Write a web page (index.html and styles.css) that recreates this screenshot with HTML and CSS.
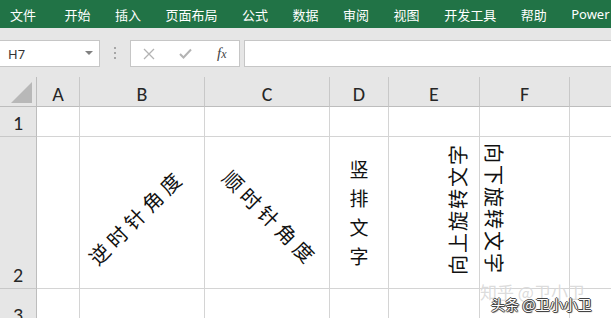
FILE: index.html
```html
<!DOCTYPE html>
<html lang="zh-CN">
<head>
  <meta charset="UTF-8" />
  <title>Excel - 文字方向</title>
  <link rel="stylesheet" href="styles.css">
</head>
<body>

  <div class="ribbon">
    <span class="tab tab-file">文件</span>
    <span class="tab">开始</span>
    <span class="tab">插入</span>
    <span class="tab">页面布局</span>
    <span class="tab">公式</span>
    <span class="tab">数据</span>
    <span class="tab">审阅</span>
    <span class="tab">视图</span>
    <span class="tab">开发工具</span>
    <span class="tab">帮助</span>
    <span class="tab tab-latin">Power</span>
  </div>

  <div class="formula-row">
    <div class="name-box">
      <span>H7</span>
      <svg width="8" height="5" viewBox="0 0 8 5"><path d="M0 0 L8 0 L4 4 Z" fill="#808080"/></svg>
    </div>
    <div class="grip">
      <svg width="3" height="13" viewBox="0 0 3 13">
        <rect x="0" y="0" width="2" height="2" fill="#a6a6a6"/>
        <rect x="0" y="5" width="2" height="2" fill="#a6a6a6"/>
        <rect x="0" y="10" width="2" height="2" fill="#a6a6a6"/>
      </svg>
    </div>
    <div class="fx-buttons">
      <svg class="btn" width="12" height="12" viewBox="0 0 12 12"><path d="M1 1 L11 11 M11 1 L1 11" stroke="#b3b3b3" stroke-width="1.3" fill="none"/></svg>
      <svg class="btn" width="13" height="11" viewBox="0 0 13 11"><path d="M1 6 L4.5 9.5 L12 1.5" stroke="#b3b3b3" stroke-width="2" fill="none"/></svg>
      <span class="fx">f<span class="fx-x">x</span></span>
    </div>
    <div class="formula-input"></div>
  </div>

  <div class="sheet">
    <div class="corner">
      <svg width="22" height="21" viewBox="0 0 22 21"><path d="M21 0 L21 21 L0 21 Z" fill="#b8b8b8"/></svg>
    </div>
    <div class="col-head">A</div>
    <div class="col-head">B</div>
    <div class="col-head">C</div>
    <div class="col-head">D</div>
    <div class="col-head">E</div>
    <div class="col-head">F</div>
    <div class="col-head col-rest"></div>

    <div class="row-head">1</div>
    <div class="cell"></div><div class="cell"></div><div class="cell"></div><div class="cell"></div>
    <div class="cell"></div><div class="cell"></div><div class="cell cell-rest"></div>

    <div class="row-head">2</div>
    <div class="cell"></div>
    <div class="cell cell-text"><span class="rot rot-ccw">逆时针角度</span></div>
    <div class="cell cell-text"><span class="rot rot-cw">顺时针角度</span></div>
    <div class="cell cell-text"><span class="stacked">竖排文字</span></div>
    <div class="cell cell-text"><span class="rot rot-up">向上旋转文字</span></div>
    <div class="cell cell-text"><span class="rot rot-down">向下旋转文字</span></div>
    <div class="cell cell-rest"></div>

    <div class="row-head">3</div>
    <div class="cell"></div><div class="cell"></div><div class="cell"></div><div class="cell"></div>
    <div class="cell"></div><div class="cell"></div><div class="cell cell-rest"></div>
  </div>

  <div class="watermark">
    <span class="wm-back">知乎 @卫小卫</span>
    <span class="wm-front">头条 @卫小小卫</span>
  </div>

</body>
</html>
```

FILE: styles.css
```css
* {
  box-sizing: border-box;
}
body {
  margin: 0;
  width: 611px;
  height: 318px;
  overflow: hidden;
  background-color: #e6e6e6;
  font-family: "Noto Sans CJK SC", sans-serif;
  position: relative;
}
.ribbon {
  height: 28px;
  background-color: #217346;
  color: white;
  display: flex;
  align-items: center;
  gap: 24.5px;
  padding-left: 10px;
  font-size: 13px;
  white-space: nowrap;
}
.tab-file {
  margin-right: 4px;
}
.tab-latin {
  font-family: "Noto Sans", sans-serif;
}
.formula-row {
  height: 49px;
  display: flex;
  align-items: flex-start;
  padding-top: 12px;
}
.name-box {
  width: 101px;
  height: 27px;
  margin-left: -1px;
  background: white;
  border: 1px solid #c6c6c6;
  display: flex;
  align-items: center;
  justify-content: space-between;
  padding: 0 6px 0 8px;
  font-family: "Noto Sans", sans-serif;
  font-size: 13px;
  color: #333;
}
.grip {
  width: 30px;
  height: 27px;
  display: flex;
  align-items: center;
  justify-content: center;
}
.fx-buttons {
  width: 110px;
  height: 27px;
  background: white;
  border: 1px solid #c6c6c6;
  display: flex;
  align-items: center;
  padding-left: 12px;
  gap: 24px;
}
.fx {
  font-family: "Liberation Serif", serif;
  font-style: italic;
  font-size: 15px;
  color: #444;
  margin-left: 1px;
}
.fx-x {
  font-size: 12px;
}
.formula-input {
  flex: 1;
  height: 27px;
  margin-left: 4px;
  margin-right: -2px;
  background: white;
  border: 1px solid #c6c6c6;
}
.sheet {
  display: grid;
  grid-template-columns: 37px 43px 125px 125px 59px 91px 90px 1fr;
  grid-template-rows: 30px 30px 152px 40px;
  background: white;
}
.corner {
  background: #e6e6e6;
  border-right: 1px solid #bdbdbd;
  border-bottom: 1px solid #bdbdbd;
  display: flex;
  align-items: flex-end;
  justify-content: flex-end;
  padding: 0 3px 3px 0;
}
.col-head {
  background: #e6e6e6;
  border-right: 1px solid #c8c8c8;
  border-bottom: 1px solid #bdbdbd;
  display: flex;
  align-items: center;
  justify-content: center;
  padding-top: 4px;
  font-family: Carlito, Lato, sans-serif;
  font-size: 20px;
  color: #262626;
}
.col-rest {
  border-right: none;
}
.row-head {
  background: #e6e6e6;
  border-right: 1px solid #bdbdbd;
  border-bottom: 1px solid #c8c8c8;
  display: flex;
  align-items: flex-end;
  justify-content: center;
  padding-bottom: 1px;
  font-family: Carlito, Lato, sans-serif;
  font-size: 20px;
  color: #262626;
}
.cell {
  border-right: 1px solid #d4d4d4;
  border-bottom: 1px solid #d4d4d4;
}
.cell-rest {
  border-right: none;
}
.cell-text {
  display: flex;
  align-items: center;
  justify-content: center;
  font-size: 20px;
  color: #111;
  white-space: nowrap;
}
.rot {
  display: inline-block;
  line-height: 1;
}
.rot-ccw {
  letter-spacing: 5px;
  transform: translate(-6px, 4px) rotate(-45deg);
}
.rot-cw {
  letter-spacing: 5px;
  transform: translate(3px, 5px) rotate(45deg);
}
.rot-up {
  letter-spacing: 2px;
  transform: translate(24px, -4px) rotate(-90deg);
}
.rot-down {
  letter-spacing: 2px;
  transform: translate(-31px, -4px) rotate(90deg);
}
.stacked {
  writing-mode: vertical-rl;
  text-orientation: upright;
  letter-spacing: 10px;
  line-height: 1;
  font-size: 19px;
  transform: translate(0, 5px);
}
.watermark {
  position: absolute;
  left: 478px;
  top: 279px;
  width: 133px;
  height: 39px;
  white-space: nowrap;
}
.wm-back {
  position: absolute;
  left: 2px;
  top: 0;
  font-size: 17px;
  color: rgba(190, 190, 190, 0.55);
  text-shadow: 0 0 1px rgba(255, 255, 255, 0.8);
}
.wm-front {
  position: absolute;
  left: 13px;
  top: 15px;
  font-size: 14px;
  color: white;
  text-shadow: 1px 0 0 #444, -1px 0 0 #444, 0 1px 0 #444, 0 -1px 0 #444, 1px 1px 1px #555;
}
```
